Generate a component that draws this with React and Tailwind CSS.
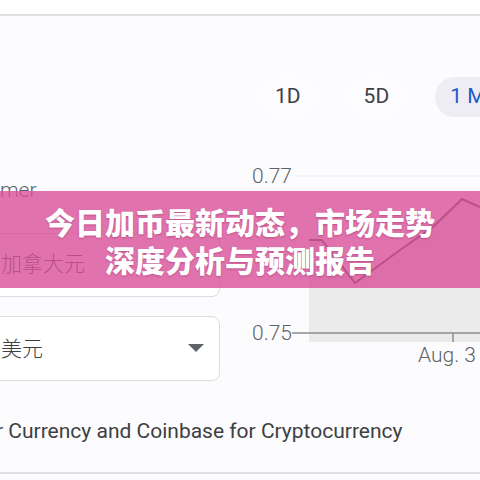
import React from "react";

const ranges = ["1D", "5D"];

const Chart = () => (
  <svg width="240" height="210" viewBox="0 0 240 210" className="block">
    <line x1="55" y1="16" x2="240" y2="16" stroke="#ececef" strokeWidth="1" />
    <text x="12" y="23" fontSize="21" fill="#5f6368" fontFamily="Roboto, sans-serif" fontWeight="300">
      0.77
    </text>
    <polygon
      points="69,80 82,80 115,123 160,90 193,67 222,39 240,47 240,182 69,182"
      fill="#ebebeb"
    />
    <polyline
      points="69,80 82,80 115,123 160,90 193,67 222,39 240,47"
      fill="none"
      stroke="#4a4d52"
      strokeWidth="2"
      strokeLinejoin="round"
    />
    <line x1="52" y1="173" x2="240" y2="173" stroke="#8a8d91" strokeWidth="1.5" />
    <line x1="213" y1="173" x2="213" y2="182" stroke="#8a8d91" strokeWidth="1.5" />
    <text x="12" y="180" fontSize="21" fill="#5f6368" fontFamily="Roboto, sans-serif" fontWeight="300">
      0.75
    </text>
    <text x="178" y="202" fontSize="21" fill="#5f6368" fontFamily="Roboto, sans-serif" fontWeight="300">
      Aug. 3
    </text>
  </svg>
);

export default function App() {
  return (
    <div className="relative w-[480px] h-[480px] overflow-hidden bg-[#fcfbfd] font-['Roboto','Noto_Sans_CJK_SC',sans-serif] text-[#3c4043]">
      <div className="h-[16px] bg-[#fefefe] border-b-2 border-[#e0dfe3]" />

      <div className="flex">
        <div className="w-[256px] ml-[-16px] pr-[20px] shrink-0">
          <div className="mt-[158px] pl-[16px] h-[32px] leading-[32px] text-[21px] font-light text-[#5f6368]">
            mer
          </div>
          <div className="mt-[27px] w-full h-[64px] rounded-lg border border-[#dadce0] bg-white flex items-center pl-[16px] text-[21px] font-light">
            加拿大元
          </div>
          <div className="mt-[19px] w-full h-[65px] rounded-lg border border-[#dadce0] bg-white flex items-center justify-between pl-[16px] pr-[15px] text-[21px] font-light">
            <span className="mt-[2px]">美元</span>
            <svg width="16" height="9" viewBox="0 0 16 9">
              <path d="M0 0 L16 0 L8 8 Z" fill="#5f6368" />
            </svg>
          </div>
        </div>

        <div className="flex-1 flex flex-col">
          <div className="mt-[61px] pl-[18px] flex items-center gap-[29px] whitespace-nowrap">
            {ranges.map((r) => (
              <div
                key={r}
                className="h-10 px-[17px] rounded-full bg-[#fdfcfe] flex items-center text-[21px] text-[#3c4043] shrink-0"
              >
                {r}
              </div>
            ))}
            <div className="h-10 pl-[15px] pr-6 rounded-full bg-[#eeedf3] flex items-center text-[21px] text-[#1a5ac6] shrink-0">
              1 M
            </div>
          </div>
          <div className="mt-[43px]">
            <Chart />
          </div>
        </div>
      </div>

      <div className="mt-[34px] pb-[25px] border-b-2 border-[#e0dfe3]">
        <div className="ml-[-4px] h-[32px] leading-[32px] text-[21px] whitespace-nowrap text-[#3c4043]">
          r Currency and Coinbase for Cryptocurrency
        </div>
      </div>

      <div className="absolute left-0 right-0 top-[191px] h-[97px] bg-[rgba(216,80,152,0.8)] flex flex-col items-center justify-center">
        <div className="font-['Noto_Sans_CJK_SC',sans-serif] font-black text-white text-[30px] leading-[38px] text-center [text-shadow:0_1px_2px_rgba(120,20,70,0.35)]">
          <div>今日加币最新动态，市场走势</div>
          <div>深度分析与预测报告</div>
        </div>
      </div>
    </div>
  );
}
